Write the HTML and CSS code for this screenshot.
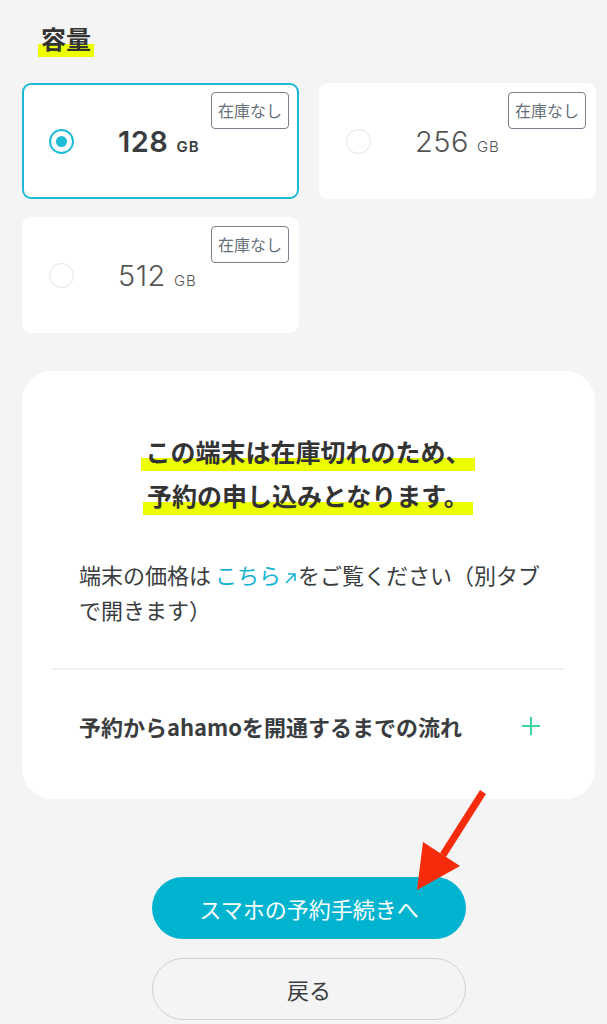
FILE: index.html
```html
<!DOCTYPE html>
<html lang="ja">
<head>
    <meta charset="UTF-8">
    <title>容量の選択</title>
    <link rel="stylesheet" href="styles.css">
</head>
<body>
<div class="page">
    <section class="capa">
        <h2 class="ttl"><span>容量</span></h2>
        <ul class="capa-list">
            <li class="on">
                <em class="radio"></em><span class="size">128<small>GB</small></span>
                <span class="stock">在庫なし</span>
            </li>
            <li>
                <em class="radio"></em><span class="size">256<small>GB</small></span>
                <span class="stock">在庫なし</span>
            </li>
            <li>
                <em class="radio"></em><span class="size">512<small>GB</small></span>
                <span class="stock">在庫なし</span>
            </li>
        </ul>
    </section>

    <div class="notice">
        <p class="notice-ttl">
            <span>この端末は在庫切れのため、</span><br>
            <span>予約の申し込みとなります。</span>
        </p>
        <p class="notice-txt">端末の価格は<a href="#">こちら<svg class="ext" viewBox="0 0 14 14" width="14" height="14"><path d="M3 12L12 3M5 3h7v7" fill="none" stroke="currentColor" stroke-width="1.6"/></svg></a>をご覧ください（別タブで開きます）</p>
        <div class="acc">
            <span>予約からahamoを開通するまでの流れ</span>
            <svg class="plus" viewBox="0 0 20 20" width="20" height="20"><path d="M10 1v18M1 10h18" stroke="#38d6a0" stroke-width="2"/></svg>
        </div>
    </div>

    <div class="btns">
        <a href="#" class="btn btn-main">スマホの予約手続きへ</a>
        <a href="#" class="btn btn-back">戻る</a>
    </div>

    <!-- 注釈の矢印 -->
    <svg class="mark" viewBox="0 0 90 110" width="90" height="110">
        <path d="M83 12L43 75" stroke="#f52b0c" stroke-width="7" fill="none"/>
        <polygon points="23,62 60,86 17,110" fill="#f52b0c"/>
    </svg>
</div>
</body>
</html>
```

FILE: styles.css
```css
*{
    margin:0;
    padding:0;
    list-style: none;
    box-sizing: border-box;
}
body{
    background: #f4f4f4;
    color: #3a3d40;
    font-family: "Noto Sans CJK JP", "Noto Sans", sans-serif;
}
a{
    text-decoration: none;
}
.page{
    position: relative;
    width: 607px;
    min-height: 1024px;
    padding: 20px 11px 0 22px;
}

/* 容量 */
.ttl{
    font-size: 25px;
    line-height: 36px;
    font-weight: 700;
    color: #333;
    padding-left: 16px;
}
.ttl span{
    padding: 0 3px 1px;
    background: linear-gradient(transparent 66%, #ebff00 66%);
}
.capa-list{
    display: grid;
    grid-template-columns: 277px 277px;
    gap: 18px 20px;
    margin-top: 27px;
}
.capa-list li{
    position: relative;
    height: 116px;
    background: #fff;
    border: 2px solid #fff;
    border-radius: 9px;
    display: flex;
    align-items: center;
    padding-left: 25px;
    color: #555;
}
.capa-list li.on{
    border-color: #1fbad6;
    color: #3a3d40;
}
.capa-list .radio{
    width: 25px;
    height: 25px;
    border-radius: 50%;
    border: 1px solid #e3e3e3;
    background: #fff;
}
.capa-list .on .radio{
    border: 2px solid #1fbad6;
    position: relative;
}
.capa-list .on .radio:after{
    content: "";
    position: absolute;
    left: 5px;
    top: 5px;
    width: 11px;
    height: 11px;
    border-radius: 50%;
    background: #1fbad6;
}
.capa-list .size{
    margin-left: 44px;
    font-family: "Inter", "Noto Sans", sans-serif;
    font-size: 29px;
    font-weight: 300;
    letter-spacing: 0.5px;
}
.capa-list .on .size{
    font-weight: 600;
}
.capa-list .size small{
    font-size: 15px;
    margin-left: 8px;
    letter-spacing: 1px;
}
.capa-list .stock{
    position: absolute;
    top: 7px;
    right: 8px;
    width: 78px;
    height: 37px;
    border: 1.5px solid #76818b;
    border-radius: 4px;
    font-size: 16px;
    line-height: 34px;
    text-align: center;
    color: #66707a;
}

/* 在庫切れのお知らせ */
.notice{
    margin: 38px 1px 0 0;
    background: #fff;
    border-radius: 30px;
    padding: 58px 30px 0 29px;
}
.notice-ttl{
    font-size: 25px;
    line-height: 44px;
    font-weight: 700;
    text-align: center;
    color: #333;
}
.notice-ttl span{
    padding: 0 4px 2px;
    background: linear-gradient(transparent 66%, #ebff00 66%);
}
.notice-txt{
    margin-top: 40px;
    padding: 0 16px 0 28px;
    font-size: 22px;
    line-height: 35px;
    color: #3a3d40;
}
.notice-txt a{
    color: #17b3d3;
    margin-left: 4px;
}
.notice-txt .ext{
    margin: 0 1px 0 2px;
    vertical-align: -1px;
}
.acc{
    margin-top: 41px;
    border-top: 2px solid #f0f0f0;
    padding: 40px 24px 57px 28px;
    display: flex;
    align-items: center;
    justify-content: space-between;
    font-size: 22px;
    line-height: 32px;
    font-weight: 700;
    color: #3a3d40;
}

/* ボタン */
.btns{
    display: flex;
    flex-direction: column;
    align-items: center;
    gap: 19px;
    margin-top: 78px;
}
.btn{
    display: block;
    width: 314px;
    height: 62px;
    border-radius: 31px;
    font-size: 22px;
    line-height: 62px;
    text-align: center;
}
.btn-main{
    background: #00b4d0;
    color: #fff;
}
.btn-back{
    border: 1px solid #cfcfcf;
    line-height: 60px;
    color: #3a3d40;
}
.mark{
    position: absolute;
    left: 400px;
    top: 780px;
}
```
